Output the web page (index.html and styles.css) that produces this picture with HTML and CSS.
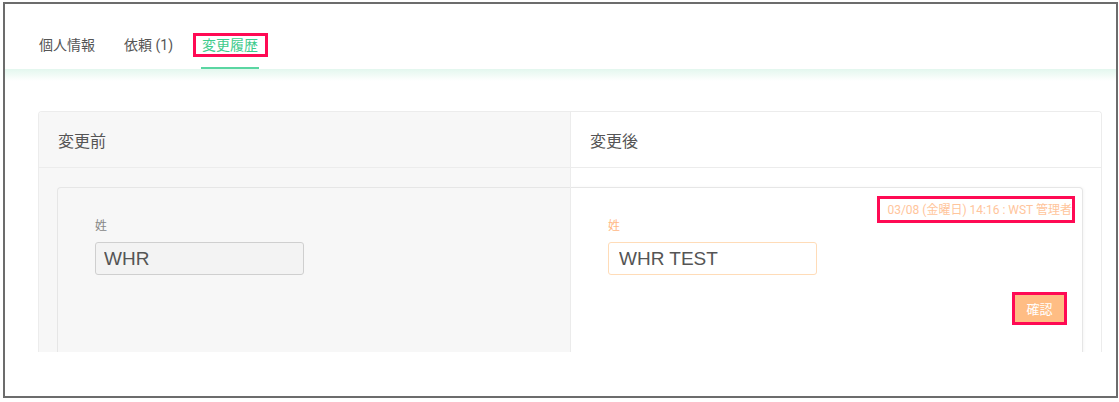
FILE: index.html
```html
<!DOCTYPE html>
<html lang="ja">
<head>
    <meta charset="UTF-8">
    <title>変更履歴</title>
    <link rel="stylesheet" href="styles.css">
</head>
<body>
    <div class="frame">
        <div class="tabs">
            <a class="tab">個人情報</a>
            <a class="tab">依頼 (1)</a>
            <a class="tab active"><span class="mark">変更履歴</span></a>
        </div>
        <div class="tabs-shadow"></div>

        <div class="card">
            <div class="col before">
                <div class="col-head">変更前</div>
                <div class="col-body">
                    <div class="box">
                        <div class="meta"></div>
                        <p class="label">姓</p>
                        <input class="field" type="text" value="WHR" readonly>
                    </div>
                </div>
            </div>

            <div class="col after">
                <div class="col-head">変更後</div>
                <div class="col-body">
                    <div class="box">
                        <div class="meta"><span class="stamp">03/08 (金曜日) 14:16 : WST 管理者</span></div>
                        <p class="label">姓</p>
                        <input class="field" type="text" value="WHR TEST" readonly>
                        <div class="actions">
                            <button class="confirm" type="button">確認</button>
                        </div>
                    </div>
                </div>
            </div>
        </div>
    </div>
</body>
</html>
```

FILE: styles.css
```css
*{
    margin: 0;
    padding: 0;
    box-sizing: border-box;
}

body{
    font-family: Roboto, "Noto Sans CJK JP", sans-serif;
    color: #555;
    background: #fff;
}

.frame{
    margin: 2px 1px 0 3px;
    height: 396px;
    border: 2px solid #6c6c6c;
    overflow: hidden;
}

/* tabs */
.tabs{
    display: flex;
    gap: 27px;
    padding: 31px 0 0 33px;
}

.tab{
    font-size: 14px;
    line-height: 20px;
    padding: 0 1px 12px;
    border-bottom: 2px solid transparent;
    color: #555;
}

.tab.active{
    color: #3ecb8c;
    border-bottom-color: #5ad6a2;
}

.mark{
    position: relative;
}

.mark::after{
    content: '';
    position: absolute;
    top: -4px;
    bottom: -4px;
    left: -9px;
    right: -10px;
    border: 3px solid #ff0a54;
}

.tabs-shadow{
    height: 12px;
    background: linear-gradient(rgba(80, 205, 150, 0.16), rgba(80, 205, 150, 0));
}

/* card */
.card{
    display: grid;
    grid-template-columns: 1fr 1fr;
    width: 1064px;
    height: 241px;
    margin: 30px 0 0 33px;
    border: 1px solid #ececec;
    border-bottom: none;
    border-radius: 4px 4px 0 0;
    overflow: hidden;
}

.col.before{
    background: #f7f7f7;
}

.col.after{
    background: #fff;
    border-left: 1px solid #ececec;
}

.col-head{
    height: 56px;
    padding-left: 19px;
    display: flex;
    align-items: center;
    font-size: 16px;
    border-bottom: 1px solid #ececec;
}

.col-body{
    padding-top: 19px;
    height: 185px;
}

.before .col-body{
    padding-left: 18px;
}

.after .col-body{
    padding-right: 18px;
}

.box{
    height: 200px;
    border: 1px solid #e6e6e6;
    padding: 14px 10px 0 37px;
}

.before .box{
    border-right: none;
    border-radius: 4px 0 0 0;
}

.after .box{
    border-left: none;
    border-radius: 0 4px 0 0;
    box-shadow: 1px 0 3px rgba(0, 0, 0, 0.04);
}

.meta{
    height: 16px;
    display: flex;
    justify-content: flex-end;
}

.stamp{
    position: relative;
    font-size: 12px;
    line-height: 16px;
    color: #ffc59c;
}

.stamp::after{
    content: '';
    position: absolute;
    top: -6px;
    bottom: -5px;
    left: -10px;
    right: -3px;
    border: 3px solid #ff0a54;
}

.label{
    font-size: 12px;
    line-height: 16px;
    margin-bottom: 8px;
    color: #888;
}

.after .label{
    color: #ffb987;
}

.field{
    display: block;
    width: 209px;
    height: 33px;
    padding: 0 8px;
    font-family: "Liberation Sans", Arial, sans-serif;
    font-size: 19px;
    color: #555;
    border: 1px solid #cfcfcf;
    border-radius: 3px;
    background: #f3f3f3;
    outline: none;
}

.after .field{
    padding: 0 10px;
    background: #fff;
    border-color: #ffdcb8;
}

.actions{
    display: flex;
    justify-content: flex-end;
    margin-top: 20px;
    padding-right: 8px;
}

.confirm{
    width: 49px;
    height: 27px;
    border: none;
    background: #ffbd84;
    color: #fff;
    font-family: "Noto Sans CJK JP", sans-serif;
    font-size: 13px;
    outline: 3px solid #ff0a54;
}
```
